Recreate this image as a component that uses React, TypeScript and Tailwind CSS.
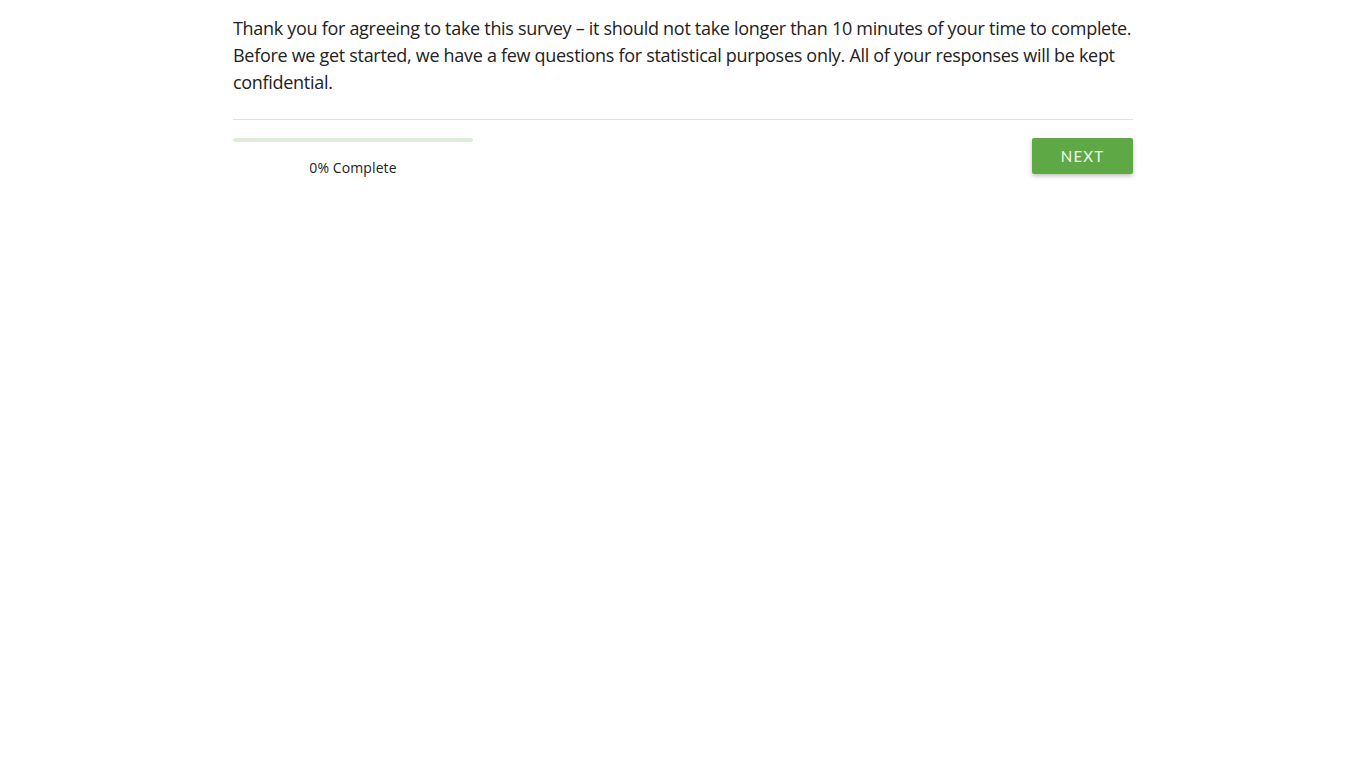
export default function App() {
  return (
    <div className="min-h-screen bg-white" style={{ fontFamily: '"Open Sans", "Liberation Sans", sans-serif' }}>
      <div className="mx-auto w-[900px] pt-[15px]">
        {/* Intro */}
        <p className="text-[18px] leading-[27px] tracking-[-0.3px] text-[#222]">
          Thank you for agreeing to take this survey – it should not take longer than 10 minutes of your time to complete.
          Before we get started, we have a few questions for statistical purposes only. All of your responses will be kept
          confidential.
        </p>

        <div className="mt-[23px] border-t border-[#e0e0e0]" />

        {/* Footer */}
        <div className="mt-[18px] flex items-start justify-between">
          <div className="w-[240px]">
            <div className="h-[4px] w-full rounded-full bg-[#deedd8]" />
            <div className="mt-[15px] text-center text-[14px] tracking-[0.1px] text-[#222]">0% Complete</div>
          </div>
          <button
            className="h-[36px] w-[101px] rounded-[2px] bg-[#5fa846] text-[15px] tracking-[0.08em] text-[#f3f8f0] shadow-[0_2px_4px_rgba(0,0,0,0.25)]"
            style={{ fontFamily: 'Lato, sans-serif' }}
          >
            NEXT
          </button>
        </div>
      </div>
    </div>
  );
}
